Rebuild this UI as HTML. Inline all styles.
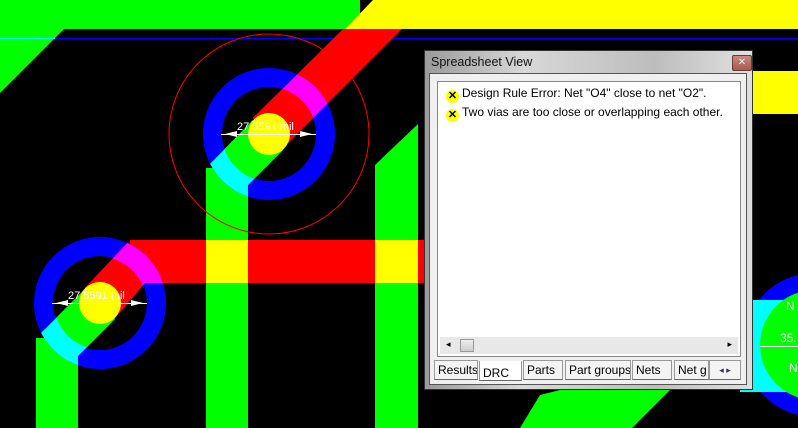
<!DOCTYPE html>
<html><head><meta charset="utf-8"><style>
body{margin:0;width:798px;height:428px;overflow:hidden;background:#000;font-family:"Liberation Sans",sans-serif}
svg{position:absolute;left:0;top:0}
.win{position:absolute;left:424px;top:50px;width:329px;height:340px;background:linear-gradient(90deg,#9a9a9a,#d8d8d8 30%,#bdbdbd 70%,#e0e0e0);border:1px solid #333;box-sizing:border-box}
.title{position:absolute;left:6px;top:4px;font-size:12.5px;color:#111}
.close{position:absolute;left:307px;top:4px;width:20px;height:16px;background:linear-gradient(#c98a80,#a85a50);border:1px solid #6a3a34;box-sizing:border-box;color:#eee;font-size:10px;text-align:center;line-height:14px;border-radius:2px}
.client{position:absolute;left:4px;top:22px;width:318px;height:312px;background:#f0f0f0;border:1px solid #555;box-sizing:border-box}
.list{position:absolute;left:7px;top:7px;width:304px;height:276px;background:#fff;border:1px solid #888;box-sizing:border-box}
.row{position:absolute;left:8px;font-size:12px;color:#000;white-space:nowrap}
.ic{display:inline-block;width:13px;height:13px;border-radius:50%;background:#ff0;color:#000;font-size:11px;font-weight:bold;text-align:center;line-height:13px;vertical-align:-2px;margin-right:3px}
.sb{position:absolute;left:2px;top:255px;width:298px;height:17px;background:#e8e8e8}
.thumb{position:absolute;left:20px;top:2px;width:14px;height:13px;background:linear-gradient(#eee,#ccc);border:1px solid #999;box-sizing:border-box}
.tab{position:absolute;top:286px;height:20px;background:#f4f4f4;border:1px solid #999;border-bottom:1px solid #666;box-sizing:border-box;font-size:12px;padding:2px 3px;color:#000;white-space:nowrap;overflow:hidden}
</style></head><body>
<svg width="798" height="428" viewBox="0 0 798 428">
<rect x="0" y="0" width="7" height="4" fill="#f00"/>
<rect x="0" y="0" width="360" height="29" fill="#0f0"/>
<polygon points="0,29 64,29 0,93" fill="#0f0"/>
<polygon points="345,29 373,0 798,0 798,29" fill="#ff0"/>
<rect x="0" y="38" width="798" height="1" fill="#00f"/>
<rect x="0" y="38" width="55" height="1" fill="#0ff"/>
<polygon points="343,29 402,29 283,148 253,118" fill="#f00"/>
<polygon points="375,165 418,124 418,428 375,428" fill="#0f0"/>
<rect x="206" y="168" width="42" height="260" fill="#0f0"/>
<rect x="36" y="338" width="42" height="90" fill="#0f0"/>
<rect x="130" y="240" width="300" height="43" fill="#f00"/>
<rect x="206" y="240" width="42" height="43" fill="#ff0"/>
<rect x="375" y="240" width="43" height="43" fill="#ff0"/>
<rect x="418" y="240" width="12" height="43" fill="#f00"/>
<circle cx="269" cy="134" r="100" fill="none" stroke="#f00" stroke-width="1"/>
<circle cx="269" cy="134" r="56.5" fill="none" stroke="#00f" stroke-width="19"/>
<clipPath id="c1"><circle cx="269" cy="134" r="66"/></clipPath>
<clipPath id="c1i"><circle cx="269" cy="134" r="47"/></clipPath>
<g clip-path="url(#c1)">
<polygon points="343,29 402,29 283,148 253,118" fill="#f0f"/>
<polygon points="206,168 253,120 283,150 248,185 248,200 206,200" fill="#0ff"/>
</g>
<g clip-path="url(#c1i)">
<polygon points="343,29 402,29 283,148 253,118" fill="#f00"/>
<polygon points="206,168 253,120 283,150 248,185 248,200 206,200" fill="#0f0"/>
</g>
<circle cx="269" cy="134" r="21" fill="#ff0"/>
<circle cx="100" cy="303" r="56.5" fill="none" stroke="#00f" stroke-width="19"/>
<clipPath id="c2"><circle cx="100" cy="303" r="66"/></clipPath>
<clipPath id="c2i"><circle cx="100" cy="303" r="46"/></clipPath>
<g clip-path="url(#c2)">
<polygon points="130,240 170,240 170,283 145,283 115,318 85,288" fill="#f0f"/>
<polygon points="36,338 85,289 115,319 78,356 78,370 36,370" fill="#0ff"/>
</g>
<g clip-path="url(#c2i)">
<polygon points="130,240 170,240 170,283 145,283 115,318 85,288" fill="#f00"/>
<polygon points="36,338 85,289 115,319 78,356 78,370 36,370" fill="#0f0"/>
</g>
<circle cx="100" cy="303" r="21" fill="#ff0"/>
<g fill="#fff" stroke="#fff">
<line x1="221" y1="134.5" x2="316" y2="134.5" stroke-width="1"/>
<polygon points="225,134 237,131 237,137" stroke="none"/>
<polygon points="312,134 300,131 300,137" stroke="none"/>
<line x1="52" y1="303.5" x2="147" y2="303.5" stroke-width="1"/>
<polygon points="56,303 68,300 68,306" stroke="none"/>
<polygon points="143,303 131,300 131,306" stroke="none"/>
</g>
<text x="237" y="130" fill="#fff" font-family="Liberation Sans" font-size="11">27.5591 mil</text>
<text x="68" y="299" fill="#fff" font-family="Liberation Sans" font-size="11">27.5591 mil</text>
<rect x="740" y="71" width="58" height="43" fill="#ff0"/>
<polygon points="520,428 540,395 560,390 670,390 632,428" fill="#0f0"/>
<circle cx="815" cy="345" r="72" fill="#00f"/>
<rect x="740" y="300" width="58" height="92" fill="#0ff"/>
<circle cx="815" cy="345" r="55" fill="#0f0"/>
<text x="786" y="310" fill="#fff" font-size="12" font-family="Liberation Sans">N</text>
<text x="780" y="342" fill="#fff" font-size="12" font-family="Liberation Sans">35.</text>
<line x1="760" y1="346.5" x2="798" y2="346.5" stroke="#fff"/>
<text x="789" y="372" fill="#fff" font-size="12" font-family="Liberation Sans">N</text>
</svg>
<div class="win">
<div class="title">Spreadsheet View</div>
<div class="close">✕</div>
<div class="client">
<div class="list">
<div class="row" style="top:4px"><span class="ic">✕</span>Design Rule Error: Net "O4" close to net "O2".</div>
<div class="row" style="top:23px"><span class="ic">✕</span>Two vias are too close or overlapping each other.</div>
<div class="sb"><span style="position:absolute;left:6px;top:2px;font-size:9px">◂</span><div class="thumb"></div><span style="position:absolute;right:6px;top:2px;font-size:9px">▸</span></div>
</div>
<div class="tab" style="left:4px;width:44px">Results</div>
<div class="tab" style="left:49px;width:43px;top:287px;background:#fff;border-top:none;padding-top:5px">DRC</div>
<div class="tab" style="left:93px;width:40px">Parts</div>
<div class="tab" style="left:135px;width:66px">Part groups</div>
<div class="tab" style="left:202px;width:40px">Nets</div>
<div class="tab" style="left:244px;width:35px">Net g</div>
<div class="tab" style="left:279px;width:32px;padding:0;font-size:9px;color:#336;text-align:center;line-height:18px">◂ ▸</div>
</div>
</div>
</body></html>
